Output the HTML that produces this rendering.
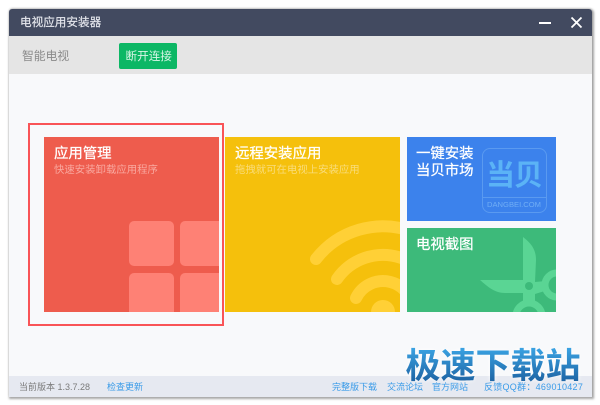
<!DOCTYPE html>
<html>
<head>
<meta charset="utf-8">
<style>
html,body{margin:0;padding:0;background:#fff;}
body{width:600px;height:405px;position:relative;overflow:hidden;font-family:"Liberation Sans","Noto Sans CJK SC",sans-serif;}
.abs,.win div,.win span{position:absolute;}
.win{position:absolute;left:9px;top:9px;width:583px;height:388px;background:#f8f9fb;border-radius:3px 3px 0 0;box-shadow:1px 1px 2px 1px rgba(0,0,0,.35),0 -1px 2px rgba(0,0,0,.12);overflow:hidden;filter:blur(.35px);}
.t{white-space:nowrap;line-height:1;}
.h{font-size:14.4px;color:#fff;-webkit-text-stroke:.25px #fff;}
</style>
</head>
<body>
<div class="win">
  <div style="left:0;top:0;width:583px;height:27px;background:#424a60;"></div>
  <span class="t" style="left:11px;top:8px;font-size:11.6px;color:#e6e8ee;-webkit-text-stroke:.15px #e6e8ee;">电视应用安装器</span>
  <div style="left:530px;top:12.5px;width:12px;height:2px;background:#fff;"></div>
  <svg style="position:absolute;left:561px;top:7px;" width="13" height="13" viewBox="0 0 13 13"><path d="M1.5 1.5L11.5 11.5M11.5 1.5L1.5 11.5" stroke="#fff" stroke-width="1.8" fill="none"/></svg>

  <div style="left:0;top:27px;width:583px;height:38px;background:#e5e5e5;"></div>
  <span class="t" style="left:13px;top:42px;font-size:11.8px;color:#8a8a8a;">智能电视</span>
  <div style="left:109.5px;top:34px;width:58.5px;height:26px;background:#0cb765;border-radius:2px;"></div>
  <span class="t" style="left:116.5px;top:41.5px;font-size:11.6px;color:#d8f5e6;">断开连接</span>

  <!-- selection -->
  <div style="left:19px;top:114px;width:192px;height:199px;border:2px solid #f95457;"></div>

  <!-- red tile -->
  <div style="left:35px;top:128px;width:175px;height:175px;background:#ee5c4d;overflow:hidden;">
    <div style="left:84.5px;top:84px;width:45px;height:45px;background:#fe8175;border-radius:5px;"></div>
    <div style="left:136px;top:84px;width:45px;height:45px;background:#fe8175;border-radius:5px;"></div>
    <div style="left:84.5px;top:136px;width:45px;height:45px;background:#fe8175;border-radius:5px;"></div>
    <div style="left:136px;top:136px;width:45px;height:45px;background:#fe8175;border-radius:5px;"></div>
  </div>
  <span class="t h" style="left:45px;top:137.5px;">应用管理</span>
  <span class="t" style="left:45px;top:157px;font-size:10.4px;color:#f9a9a0;">快速安装卸载应用程序</span>

  <!-- yellow tile -->
  <div style="left:216px;top:128px;width:175px;height:175px;background:#f5c00c;overflow:hidden;">
    <svg style="position:absolute;left:0;top:0;" width="175" height="175" viewBox="225 137 175 175">
      <circle cx="383" cy="312" r="12" fill="#ffd036"/>
      <g stroke="#ffd036" stroke-width="12" stroke-linecap="round" fill="none">
        <path d="M316 259A85 85 0 0 1 468 312"/>
        <path d="M337 279A56 56 0 0 1 439 312"/>
        <path d="M356 298A30 30 0 0 1 413 312"/>
      </g>
    </svg>
  </div>
  <span class="t h" style="left:226px;top:137.5px;">远程安装应用</span>
  <span class="t" style="left:226px;top:157px;font-size:10.4px;color:#f9dc7a;">拖拽就可在电视上安装应用</span>

  <!-- blue tile -->
  <div style="left:398px;top:128px;width:149px;height:84px;background:#3c82ec;"></div>
  <span class="t h" style="left:407px;top:137.5px;">一键安装</span>
  <span class="t h" style="left:407px;top:154.5px;">当贝市场</span>
  <div style="left:473px;top:139px;width:63px;height:63px;border:1px solid #5a9af0;border-radius:8px;"></div>
  <div style="left:473.5px;top:188px;width:64px;height:1px;background:#5a9af0;"></div>
  <span class="t" style="left:477px;top:153px;font-size:29px;font-weight:bold;letter-spacing:-1px;color:#5bb3f6;">当贝</span>
  <span class="t" style="left:478px;top:192px;font-size:7.6px;color:#70aef5;">DANGBEI.COM</span>

  <!-- green tile -->
  <div style="left:398px;top:219px;width:149px;height:84px;background:#3dba7a;overflow:hidden;">
    <svg style="position:absolute;left:0;top:0;" width="149" height="84" viewBox="407 228 149 84">
      <circle cx="557" cy="285" r="12" stroke="#5ad594" stroke-width="7" fill="none"/>
      <circle cx="529" cy="316" r="13" stroke="#5ad594" stroke-width="7" fill="none"/>
      <path d="M523 237C532 244 536 250 536 260L535 282L546 281L548 290L535 294L535 306L523 306L523 293L505 293C495 293 488 287 480 280L523 280Z" fill="#5ad594"/>
      <circle cx="529" cy="286" r="4" fill="#3dba7a"/>
    </svg>
  </div>
  <span class="t h" style="left:407px;top:228.5px;">电视截图</span>

  <!-- footer -->
  <div style="left:0;top:367px;width:583px;height:21px;background:#e6e9f1;"></div>
  <span class="t" style="left:10px;top:373.5px;font-size:9px;color:#7b7b7b;">当前版本 1.3.7.28</span>
  <span class="t" style="left:98px;top:373.5px;font-size:9px;color:#3a9be8;">检查更新</span>
  <span class="t" style="left:323px;top:373.5px;font-size:9px;color:#3a9be8;">完整版下载</span>
  <span class="t" style="left:378px;top:373.5px;font-size:9px;color:#3a9be8;">交流论坛</span>
  <span class="t" style="left:423px;top:373.5px;font-size:9px;color:#3a9be8;">官方网站</span>
  <span class="t" style="left:475px;top:373.5px;font-size:9px;letter-spacing:.27px;color:#3a9be8;">反馈QQ群：469010427</span>
</div>

<div class="abs t" style="left:405.5px;top:349px;font-size:35px;font-weight:bold;letter-spacing:0;filter:drop-shadow(0 0 2px rgba(255,255,255,.95));">
  <span style="background:linear-gradient(#3ba4e4,#1a5c9c);-webkit-background-clip:text;background-clip:text;color:transparent;">极速下载站</span>
</div>
</body>
</html>
